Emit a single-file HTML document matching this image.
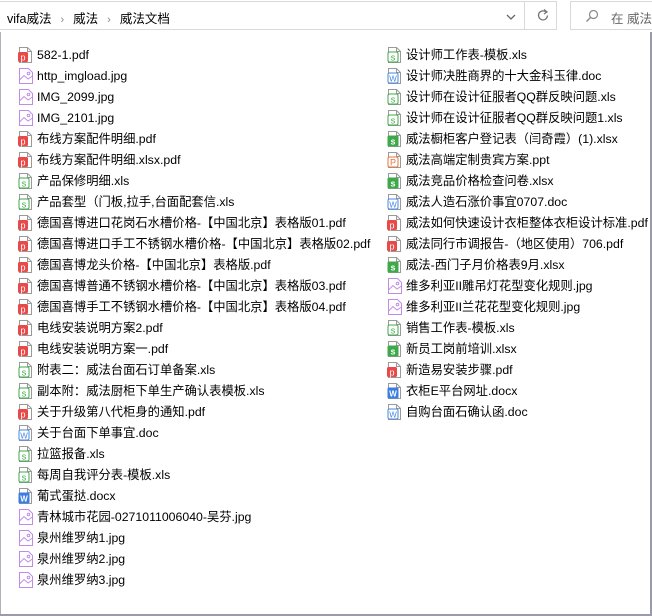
<!DOCTYPE html>
<html><head><meta charset="utf-8"><style>
body{margin:0;width:652px;height:616px;background:#fff;position:relative;overflow:hidden;font-family:"Liberation Sans","Noto Sans CJK SC",sans-serif;font-size:12.3px;color:#000}
.addr{position:absolute;left:0;top:1px;width:557px;height:29px;border:1px solid #d9d9d9;border-left:none;box-sizing:border-box}
.addr .t{position:absolute;left:7px;top:6px;font-size:12.5px}
.addr .sep{color:#888;margin:0 9px;font-size:11px}
.dd{position:absolute;left:524px;top:1px;width:1px;height:29px;background:#d9d9d9}
.search{position:absolute;left:570px;top:1px;width:90px;height:29px;border:1px solid #d9d9d9;box-sizing:border-box}
.vb{position:absolute;left:650px;top:32px;width:2px;height:584px;background:#9a9aa8}
.hb{position:absolute;left:0;top:614px;width:652px;height:2px;background:#9a9aa8}
.lb{position:absolute;left:0;top:32px;width:1px;height:584px;background:#b0b0b8}
.row{position:absolute;height:21px;line-height:21px;white-space:nowrap}
.row svg{position:absolute;left:0;top:2px}
.row span{position:absolute;left:19px;top:0}
</style></head><body>
<div class="addr"><div class="t">vifa威法<span class="sep">›</span>威法<span class="sep">›</span>威法文档</div>
<svg style="position:absolute;left:506px;top:11px" width="10" height="8"><path d="M1 2 L5 6 L9 2" stroke="#666" fill="none" stroke-width="1.3"/></svg></div>
<div class="dd"></div>
<svg style="position:absolute;left:536px;top:8px" width="14" height="14"><path d="M10 4 A4.5 4.5 0 1 0 11.5 7.5" stroke="#777" fill="none" stroke-width="1.3"/><path d="M8 1.5 L11 4 L8 6" stroke="#777" fill="none" stroke-width="1.3"/></svg>
<div class="search"><svg style="position:absolute;left:14px;top:7px" width="14" height="14"><circle cx="8.5" cy="5.5" r="4" stroke="#888" fill="none" stroke-width="1.2"/><path d="M5.5 8.5 L1.5 12.5" stroke="#888" stroke-width="1.3"/></svg><span style="position:absolute;left:40px;top:6px;color:#666;font-size:12.5px">在 威法</span></div>
<div class="lb"></div><div class="vb"></div><div class="hb"></div>
<div id="list"></div>
<svg width="0" height="0" style="position:absolute">
<defs>
<g id="pg"><path d="M1.5 .5 H9.5 L13.5 4.5 V15.5 H1.5 Z" fill="#fff" stroke="#9a9a9a"/><path d="M9.5 .5 V4.5 H13.5" fill="none" stroke="#9a9a9a"/></g>
</defs></svg>
<script>
var L=[["582-1.pdf","p"],["http_imgload.jpg","i"],["IMG_2099.jpg","i"],["IMG_2101.jpg","i"],["布线方案配件明细.pdf","p"],["布线方案配件明细.xlsx.pdf","p"],["产品保修明细.xls","s"],["产品套型（门板,拉手,台面配套信.xls","s"],["德国喜博进口花岗石水槽价格-【中国北京】表格版01.pdf","p"],["德国喜博进口手工不锈钢水槽价格-【中国北京】表格版02.pdf","p"],["德国喜博龙头价格-【中国北京】表格版.pdf","p"],["德国喜博普通不锈钢水槽价格-【中国北京】表格版03.pdf","p"],["德国喜博手工不锈钢水槽价格-【中国北京】表格版04.pdf","p"],["电线安装说明方案2.pdf","p"],["电线安装说明方案一.pdf","p"],["附表二：威法台面石订单备案.xls","s"],["副本附：威法厨柜下单生产确认表模板.xls","s"],["关于升级第八代柜身的通知.pdf","p"],["关于台面下单事宜.doc","w"],["拉篮报备.xls","s"],["每周自我评分表-模板.xls","s"],["葡式蛋挞.docx","W"],["青林城市花园-0271011006040-吴芬.jpg","i"],["泉州维罗纳1.jpg","i"],["泉州维罗纳2.jpg","i"],["泉州维罗纳3.jpg","i"]];
var R=[["设计师工作表-模板.xls","s"],["设计师决胜商界的十大金科玉律.doc","w"],["设计师在设计征服者QQ群反映问题.xls","s"],["设计师在设计征服者QQ群反映问题1.xls","s"],["威法橱柜客户登记表（闫奇霞）(1).xlsx","S"],["威法高端定制贵宾方案.ppt","t"],["威法竞品价格检查问卷.xlsx","S"],["威法人造石涨价事宜0707.doc","w"],["威法如何快速设计衣柜整体衣柜设计标准.pdf","p"],["威法同行市调报告-（地区使用）706.pdf","p"],["威法-西门子月价格表9月.xlsx","S"],["维多利亚II雕吊灯花型变化规则.jpg","i"],["维多利亚II兰花花型变化规则.jpg","i"],["销售工作表-模板.xls","s"],["新员工岗前培训.xlsx","S"],["新造易安装步骤.pdf","p"],["衣柜E平台网址.docx","W"],["自购台面石确认函.doc","w"]];
function icon(t){
 var s='<svg width="16" height="17"><use href="#pg"/>';
 if(t=="i"){s='<svg width="16" height="17"><path d="M1.5 .5 H10.5 L14.5 4.5 V15.5 H1.5 Z" fill="#fff" stroke="#c08ce8"/><path d="M1.5 12 L6 7.5 L10 11 L14.5 8" fill="none" stroke="#c08ce8"/><circle cx="10.5" cy="5.5" r="1.3" fill="none" stroke="#c08ce8"/>';}
 else if(t=="p"){s+='<rect x="0" y="5" width="10" height="10" rx="1.5" fill="#e84a4a"/><text x="5" y="13.5" font-size="9" fill="#fff" text-anchor="middle" font-family="Liberation Sans">p</text>';}
 else if(t=="s"){s+='<rect x="1" y="5" width="10" height="10" rx="1.5" fill="#fff" stroke="#3fa84a"/><text x="6" y="13.5" font-size="9" fill="#3fa84a" text-anchor="middle" font-family="Liberation Sans">s</text>';}
 else if(t=="S"){s+='<rect x="0.5" y="4.5" width="11" height="11" rx="1.5" fill="#3fa84a"/><text x="6" y="13.5" font-size="9" fill="#fff" text-anchor="middle" font-family="Liberation Sans" font-weight="bold">s</text>';}
 else if(t=="w"){s+='<rect x="1" y="5" width="10" height="10" rx="1.5" fill="#fff" stroke="#4a88e0"/><text x="6" y="13.5" font-size="8" fill="#4a88e0" text-anchor="middle" font-family="Liberation Sans">W</text>';}
 else if(t=="W"){s+='<rect x="0.5" y="4.5" width="11" height="11" rx="1.5" fill="#3c7de0"/><text x="6" y="13.5" font-size="8" fill="#fff" text-anchor="middle" font-family="Liberation Sans" font-weight="bold">W</text>';}
 else if(t=="t"){s+='<rect x="1" y="5" width="10" height="10" rx="1.5" fill="#fff" stroke="#e8753a"/><text x="6" y="13.5" font-size="9" fill="#e8753a" text-anchor="middle" font-family="Liberation Sans">P</text>';}
 return s+'</svg>';
}
var h='';
L.forEach(function(e,i){h+='<div class="row" style="left:18px;top:'+(45+i*21)+'px">'+icon(e[1])+'<span>'+e[0]+'</span></div>';});
R.forEach(function(e,i){h+='<div class="row" style="left:387px;top:'+(45+i*21)+'px">'+icon(e[1])+'<span>'+e[0]+'</span></div>';});
document.getElementById('list').innerHTML=h;
</script>
</body></html>
